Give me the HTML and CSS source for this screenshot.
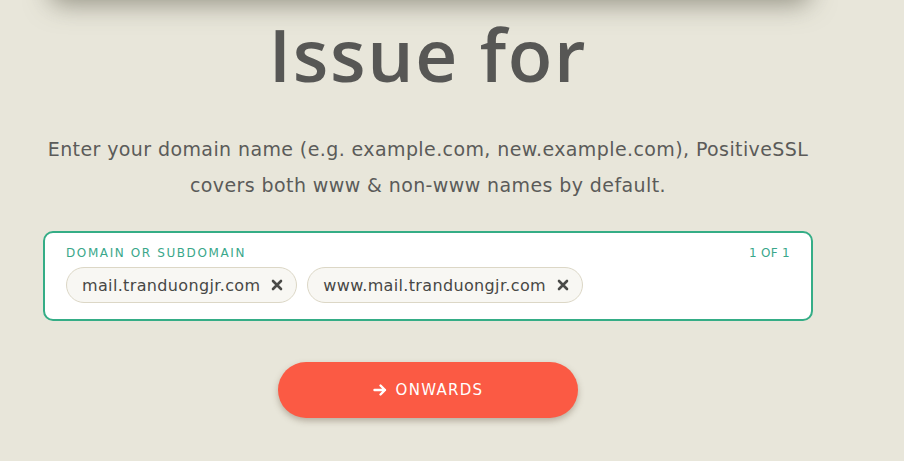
FILE: index.html
```html
<!DOCTYPE html>
<html>
<head>
<meta charset="utf-8">
<link rel="stylesheet" href="styles.css">
</head>
<body>
<div class="page">
  <div class="top-card"></div>
  <main class="content">
    <h1 class="title">Issue for</h1>
    <p class="lead">Enter your domain name (e.g. example.com, new.example.com), PositiveSSL<br>covers both www &amp; non-www names by default.</p>
    <div class="field">
      <div class="field-head">
        <span class="field-label">DOMAIN OR SUBDOMAIN</span>
        <span class="field-count">1 OF 1</span>
      </div>
      <div class="chips">
        <span class="chip">mail.tranduongjr.com
          <svg class="chip-x" viewBox="0 0 12 12" width="12" height="12"><path d="M2 2L10 10M10 2L2 10" stroke="#4a4a48" stroke-width="2.6" stroke-linecap="round"/></svg>
        </span>
        <span class="chip">www.mail.tranduongjr.com
          <svg class="chip-x" viewBox="0 0 12 12" width="12" height="12"><path d="M2 2L10 10M10 2L2 10" stroke="#4a4a48" stroke-width="2.6" stroke-linecap="round"/></svg>
        </span>
      </div>
    </div>
    <div class="actions">
      <button class="btn">
        <svg class="btn-arrow" viewBox="0 0 14 14" width="14" height="14"><path d="M1.5 7H12M7.5 2.5L12 7L7.5 11.5" fill="none" stroke="#fff" stroke-width="2.4" stroke-linecap="round" stroke-linejoin="round"/></svg>
        ONWARDS
      </button>
    </div>
  </main>
</div>
</body>
</html>
```
FILE: styles.css
```css
* { box-sizing: border-box; }
html, body { margin: 0; padding: 0; }
body {
  background: #e8e6da;
  font-family: "DejaVu Sans", "Open Sans", sans-serif;
  overflow: hidden;
  height: 461px;
}
.page { position: relative; }
.top-card {
  height: 40px;
  margin: -40px 0 0 50px;
  width: 760px;
  background: #e8e6da;
  border-radius: 12px;
  box-shadow: 0 4px 26px rgba(80, 78, 62, 0.55);
}
.content {
  width: 770px;
  margin-left: 43px;
  display: flex;
  flex-direction: column;
  align-items: center;
}
.title {
  margin: 8px 0 0;
  font-family: "Open Sans", sans-serif;
  font-size: 73px;
  line-height: 92px;
  font-weight: 600;
  color: #575755;
  letter-spacing: 1.7px;
}
.lead {
  margin: 31px 0 0;
  font-size: 19px;
  line-height: 36px;
  color: #5b5b59;
  text-align: center;
  font-weight: 400;
  letter-spacing: 0.4px;
  white-space: nowrap;
}
.field {
  align-self: stretch;
  margin-top: 28px;
  height: 90px;
  background: #fff;
  border: 2px solid #35ad86;
  border-radius: 10px;
  padding: 12px 21px 0 21px;
}
.field-head {
  display: flex;
  justify-content: space-between;
  font-size: 12px;
  letter-spacing: 1.6px;
  color: #3aa78a;
  line-height: 16px;
}
.field-count { letter-spacing: 0.3px; }
.chips {
  display: flex;
  gap: 10px;
  margin-top: 6px;
}
.chip {
  display: inline-flex;
  align-items: center;
  height: 36px;
  padding: 0 13px 0 15px;
  border: 1px solid #dcd7c6;
  border-radius: 18px;
  background: #f8f7f3;
  font-size: 16px;
  letter-spacing: 0.35px;
  color: #474745;
  gap: 11px;
}
.chip-x { display: block; }
.actions {
  margin-top: 41px;
  display: flex;
  justify-content: center;
}
.btn {
  width: 300px;
  height: 56px;
  border: none;
  border-radius: 28px;
  background: #fb5a44;
  color: #fff;
  font-family: "DejaVu Sans", sans-serif;
  font-size: 15px;
  font-weight: 400;
  letter-spacing: 1.3px;
  display: flex;
  align-items: center;
  justify-content: center;
  gap: 9px;
  box-shadow: 0 3px 6px rgba(90, 70, 50, 0.35);
}
.btn-arrow { display: block; }
```
